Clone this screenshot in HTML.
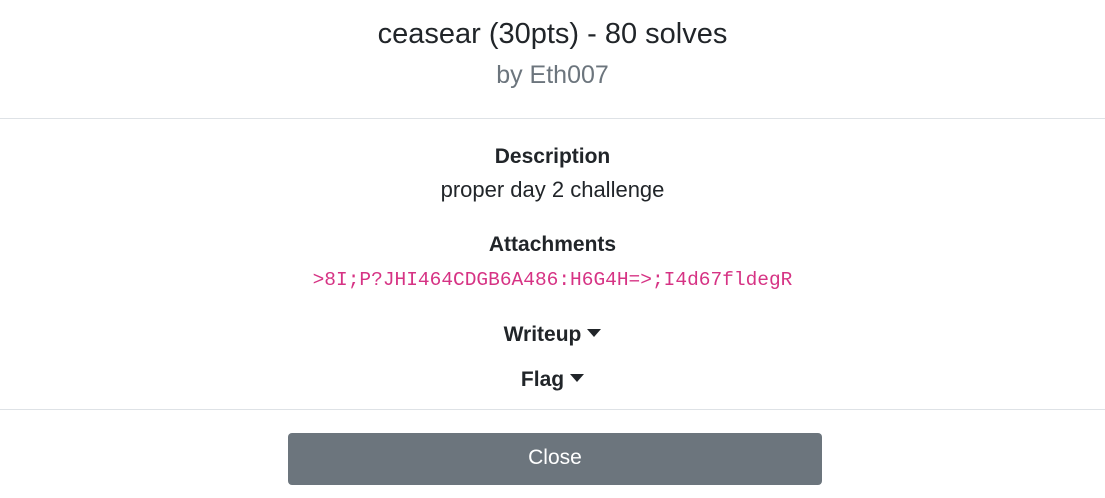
<!DOCTYPE html>
<html><head><meta charset="utf-8"><style>
html,body{margin:0;padding:0;background:#fff;width:1105px;height:498px;overflow:hidden;font-family:"Liberation Sans",sans-serif;color:#212529}
.hdr{position:absolute;top:0;left:0;width:1105px;height:118px;border-bottom:1px solid #dee2e6;text-align:center}
.t1{position:absolute;top:18px;width:100%;font-size:29px;color:#212529}
.t2{position:absolute;top:61px;width:100%;font-size:25px;color:#6c757d}
.c{position:absolute;width:100%;text-align:center}
.h{font-size:21px;font-weight:bold}
.b{font-size:22px}
.mono{font-family:"Liberation Mono",monospace;font-size:19.5px;color:#d63384}
.arr{display:inline-block;width:0;height:0;border-left:7px solid transparent;border-right:7px solid transparent;border-top:8px solid #212529;vertical-align:middle;margin-left:6px;margin-top:-4px}
.ftr{position:absolute;top:409px;left:0;width:1105px;border-top:1px solid #dee2e6}
.btn{position:absolute;top:433px;left:288px;width:534px;height:52px;background:#6c757d;border-radius:4px;color:#fff;font-size:21px;text-align:center;line-height:50px}
</style></head><body>
<div class="hdr"><div class="t1">ceasear (30pts) - 80 solves</div><div class="t2">by Eth007</div></div>
<div class="c h" style="top:145px">Description</div>
<div class="c b" style="top:177px">proper day 2 challenge</div>
<div class="c h" style="top:233px">Attachments</div>
<div class="c mono" style="top:269px">&gt;8I;P?JHI464CDGB6A486:H6G4H=&gt;;I4d67fldegR</div>
<div class="c h" style="top:323px">Writeup<span class="arr"></span></div>
<div class="c h" style="top:368px">Flag<span class="arr"></span></div>
<div class="ftr"></div>
<div class="btn">Close</div>
</body></html>
